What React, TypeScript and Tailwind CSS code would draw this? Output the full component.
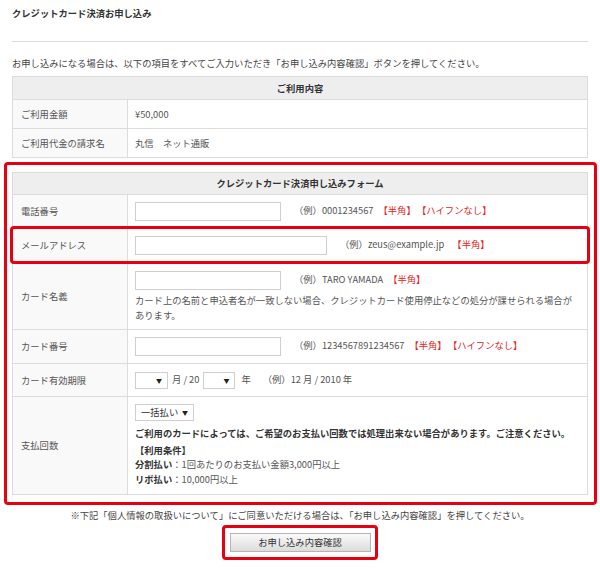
import React from 'react';

const cell = 'border border-[#dcdcdc]';
const labelCell = 'border border-[#dcdcdc] bg-[#f9f9f9] pl-2 w-[115px] text-left font-normal';
const valueCell = 'border border-[#dcdcdc] pl-[7px] pr-2';

function Red({ children }: { children: React.ReactNode }) {
  return <span className="text-[#e0261d]">{children}</span>;
}

function Input({ w }: { w: string }) {
  return <div className={`inline-block align-middle h-[19px] border border-[#cfcfcf] bg-white ${w}`} />;
}

function Select({ w, label }: { w: string; label?: string }) {
  return (
    <div
      className={`inline-flex align-middle items-center justify-between h-[17px] border border-[#cfcfcf] bg-white px-[5px] ${w}`}
    >
      <span className="text-[#333]">{label}</span>
      <span className="text-[6px] text-[#222]">▼</span>
    </div>
  );
}

export default function App() {
  return (
    <div
      className="min-h-screen bg-white px-3 text-[9.3px] leading-[13px] text-[#555]"
      style={{ fontFamily: '"Noto Sans CJK JP", "Noto Sans", sans-serif' }}
    >
      <div className="h-[41px] pt-[7px] font-bold text-[#333]">クレジットカード決済お申し込み</div>
      <div className="border-t border-[#dcdcdc]" />
      <div className="pt-[15px] pb-[6px] text-[#444]">
        お申し込みになる場合は、以下の項目をすべてご入力いただき「お申し込み内容確認」ボタンを押してください。
      </div>

      <table className="w-full border-collapse">
        <tbody>
          <tr className="h-[23px] bg-[#eeeeee]">
            <th colSpan={2} className={`${cell} font-bold text-[#333]`}>
              ご利用内容
            </th>
          </tr>
          <tr className="h-[29px]">
            <td className={labelCell}>ご利用金額</td>
            <td className={valueCell}>¥50,000</td>
          </tr>
          <tr className="h-[29px]">
            <td className={labelCell}>ご利用代金の請求名</td>
            <td className={valueCell}>丸信　ネット通販</td>
          </tr>
        </tbody>
      </table>

      <div className="relative mt-[4px] -ml-2 -mr-[9px] rounded-[4px] border-[3px] border-[#e60012] pt-[7px] pb-[7px] pl-[5px] pr-[6px]">
        <table className="w-full border-collapse">
          <tbody>
            <tr className="h-[22px] bg-[#eeeeee]">
              <th colSpan={2} className={`${cell} font-bold text-[#333]`}>
                クレジットカード決済申し込みフォーム
              </th>
            </tr>
            <tr className="h-[34px]">
              <td className={labelCell}>電話番号</td>
              <td className={valueCell}>
                <Input w="w-[146px]" />
                <span className="ml-[13px]">（例）0001234567</span>
                <span className="ml-[5px]">
                  <Red>【半角】</Red>
                </span>
                <span className="ml-[6px]">
                  <Red>【ハイフンなし】</Red>
                </span>
              </td>
            </tr>
            <tr className="h-[34px]">
              <td className={labelCell}>メールアドレス</td>
              <td className={valueCell}>
                <Input w="w-[192px]" />
                <span className="ml-[13px]">（例）zeus@example.jp</span>
                <span className="ml-[8px]">
                  <Red>【半角】</Red>
                </span>
              </td>
            </tr>
            <tr className="h-[66px]">
              <td className={labelCell}>カード名義</td>
              <td className={`${valueCell} pt-[8px] pb-[6px] align-top leading-[15px]`}>
                <div>
                  <Input w="w-[146px]" />
                  <span className="ml-[13px]">（例）TARO YAMADA</span>
                  <span className="ml-[5px]">
                    <Red>【半角】</Red>
                  </span>
                </div>
                <div className="mt-[3px] whitespace-nowrap">
                  カード上の名前と申込者名が一致しない場合、クレジットカード使用停止などの処分が課せられる場合が
                </div>
                <div>あります。</div>
              </td>
            </tr>
            <tr className="h-[34px]">
              <td className={labelCell}>カード番号</td>
              <td className={valueCell}>
                <Input w="w-[146px]" />
                <span className="ml-[13px]">（例）1234567891234567</span>
                <span className="ml-[5px]">
                  <Red>【半角】</Red>
                </span>
                <span className="ml-[6px]">
                  <Red>【ハイフンなし】</Red>
                </span>
              </td>
            </tr>
            <tr className="h-[33px]">
              <td className={labelCell}>カード有効期限</td>
              <td className={valueCell}>
                <Select w="w-[33px]" />
                <span className="mx-[4px]">月 / 20</span>
                <Select w="w-[32px]" />
                <span className="ml-[6px]">年</span>
                <span className="ml-[12px]">（例）12 月 / 2010 年</span>
              </td>
            </tr>
            <tr className="h-[97px]">
              <td className={labelCell}>支払回数</td>
              <td className={`${valueCell} pt-[7px] pb-[7px] align-top`}>
                <Select w="w-[59px]" label="一括払い" />
                <div className="mt-[5px] font-bold text-[#333] leading-[14px]">
                  ご利用のカードによっては、ご希望のお支払い回数では処理出来ない場合があります。ご注意ください。
                </div>
                <div className="mt-[3px] font-bold text-[#333] leading-[14px]">【利用条件】</div>
                <div className="leading-[15px]">
                  <span className="font-bold text-[#333]">分割払い</span>：1回あたりのお支払い金額3,000円以上
                </div>
                <div className="leading-[15px]">
                  <span className="font-bold text-[#333]">リボ払い</span>：10,000円以上
                </div>
              </td>
            </tr>
          </tbody>
        </table>
        <div className="pointer-events-none absolute left-[3px] top-[61px] h-[38px] w-[580px] rounded-[4px] border-[3px] border-[#e60012]" />
      </div>

      <div className="pt-[4px] text-center text-[#444]">
        ※下記「個人情報の取扱いについて」にご同意いただける場合は、「お申し込み内容確認」を押してください。
      </div>
      <div className="mt-[3px] flex justify-center">
        <div className="flex h-[35px] w-[156px] items-center justify-center rounded-[4px] border-[3px] border-[#e60012]">
          <button className="h-[19px] w-[141px] border border-[#b5b5b5] bg-gradient-to-b from-[#fafafa] to-[#dcdcdc] text-[9.3px] text-[#333]">
            お申し込み内容確認
          </button>
        </div>
      </div>
    </div>
  );
}
